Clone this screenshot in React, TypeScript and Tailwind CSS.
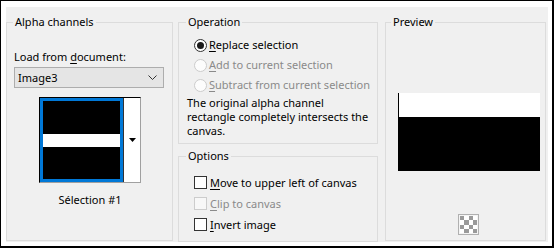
import React from 'react';

const FONT = { fontFamily: '"Noto Sans", "Open Sans", sans-serif' };

function Key({ children }: { children: React.ReactNode }) {
  return <span className="underline underline-offset-2 decoration-1">{children}</span>;
}

function Radio({ checked, disabled, children }: { checked?: boolean; disabled?: boolean; children: React.ReactNode }) {
  return (
    <div className="h-[20px] flex items-center pl-[15px] whitespace-nowrap">
      <span
        className={
          'w-[13px] h-[13px] rounded-full border flex items-center justify-center flex-shrink-0 ' +
          (disabled ? 'border-[#cccccc] bg-[#fcfcfc]' : 'border-[#333333] bg-white')
        }
      >
        {checked && <span className="w-[7px] h-[7px] rounded-full bg-[#1a1a1a]" />}
      </span>
      <span className={'ml-[2px] ' + (disabled ? 'text-[#8a8a8a]' : 'text-black')}>{children}</span>
    </div>
  );
}

function Check({ disabled, children }: { disabled?: boolean; children: React.ReactNode }) {
  return (
    <div className="h-[21px] flex items-center pl-[15px] whitespace-nowrap">
      <span
        className={
          'w-[13px] h-[13px] border flex-shrink-0 ' +
          (disabled ? 'border-[#cccccc] bg-[#f7f7f7]' : 'border-[#333333] bg-white')
        }
      />
      <span className={'ml-[3px] ' + (disabled ? 'text-[#8a8a8a]' : 'text-black')}>{children}</span>
    </div>
  );
}

export default function App() {
  return (
    <div
      className="w-[554px] h-[248px] bg-white border-t border-l border-r-2 border-b-2 border-black pl-[5px] pt-[6px] pr-[4px] pb-[4px] text-[11px] leading-[16px] text-black"
      style={FONT}
    >
      <div className="w-full h-full bg-[#f0f0f0] pt-[7px] flex">
        {/* Alpha channels */}
        <fieldset className="w-[167px] h-[227px] border border-[#dcdcdc]">
          <legend className="ml-[6px] px-[2px]">Alpha channels</legend>
          <div className="pl-[7px] pt-[19px]">
            <p>
              Load from <Key>d</Key>ocument:
            </p>
            <div className="mt-[2px] w-[150px] h-[21px] bg-[#e5e5e5] border border-[#adadad] flex items-center justify-between pl-[3px] pr-[6px]">
              <span>Image3</span>
              <svg width="9" height="5" viewBox="0 0 9 5" fill="none">
                <polyline points="0.5,0.5 4.5,4.5 8.5,0.5" stroke="#333" strokeWidth="1" />
              </svg>
            </div>
            <div className="ml-[25px] mt-[9px] w-[102px]">
              <div className="h-[86px] flex border-t border-l border-black border-r border-b border-r-[#a0a0a0] border-b-[#a0a0a0] bg-white">
                <div className="w-[83px] h-[84px] border-[3px] border-[#0078d7] bg-black flex flex-col">
                  <div className="h-[33px]" />
                  <div className="h-[13px] bg-white" />
                </div>
                <div className="flex-1 border-l border-[#333333] bg-white flex items-center justify-center">
                  <svg width="7" height="4" viewBox="0 0 7 4">
                    <polygon points="0,0 7,0 3.5,4" fill="#000" />
                  </svg>
                </div>
              </div>
              <p className="mt-[9px] text-center">Sélection #1</p>
            </div>
          </div>
        </fieldset>

        {/* Operation + Options */}
        <div className="ml-[5px] w-[200px] flex flex-col gap-[4px]">
          <fieldset className="h-[130px] border border-[#dcdcdc]">
            <legend className="ml-[7px] px-[2px]">Operation</legend>
            <div className="pt-[5px]">
              <Radio checked>
                <Key>R</Key>eplace selection
              </Radio>
              <Radio disabled>
                <Key>A</Key>dd to current selection
              </Radio>
              <Radio disabled>
                <Key>S</Key>ubtract from current selection
              </Radio>
              <p className="pl-[8px] mt-[1px] leading-[14px] whitespace-nowrap">
                The original alpha channel
                <br />
                rectangle completely intersects the
                <br />
                canvas.
              </p>
            </div>
          </fieldset>
          <fieldset className="h-[94px] border border-[#dcdcdc]">
            <legend className="ml-[7px] px-[2px]">Options</legend>
            <div className="pt-[8px]">
              <Check>
                <Key>M</Key>ove to upper left of canvas
              </Check>
              <Check disabled>
                <Key>C</Key>lip to canvas
              </Check>
              <Check>
                <Key>I</Key>nvert image
              </Check>
            </div>
          </fieldset>
        </div>

        {/* Preview */}
        <fieldset className="ml-[7px] w-[161px] h-[227px] border border-[#dcdcdc]">
          <legend className="ml-[5px] px-[2px]">Preview</legend>
          <div className="pl-[12px] pt-[63px]">
            <div className="w-[142px] h-[78px] flex flex-col">
              <div className="h-[24px] bg-white border-l border-black" />
              <div className="flex-1 bg-black" />
            </div>
            <div className="ml-[60px] mt-[43px] w-[21px] h-[21px] border border-[#b0b0b0] bg-[#f4f4f4] p-[1px]">
              <div className="grid grid-cols-4 w-[17px] h-[17px]">
                {Array.from({ length: 16 }).map((_, i) => (
                  <div
                    key={i}
                    className={(Math.floor(i / 4) + (i % 4)) % 2 === 0 ? 'bg-[#9a9a9a]' : 'bg-white'}
                  />
                ))}
              </div>
            </div>
          </div>
        </fieldset>
      </div>
    </div>
  );
}
